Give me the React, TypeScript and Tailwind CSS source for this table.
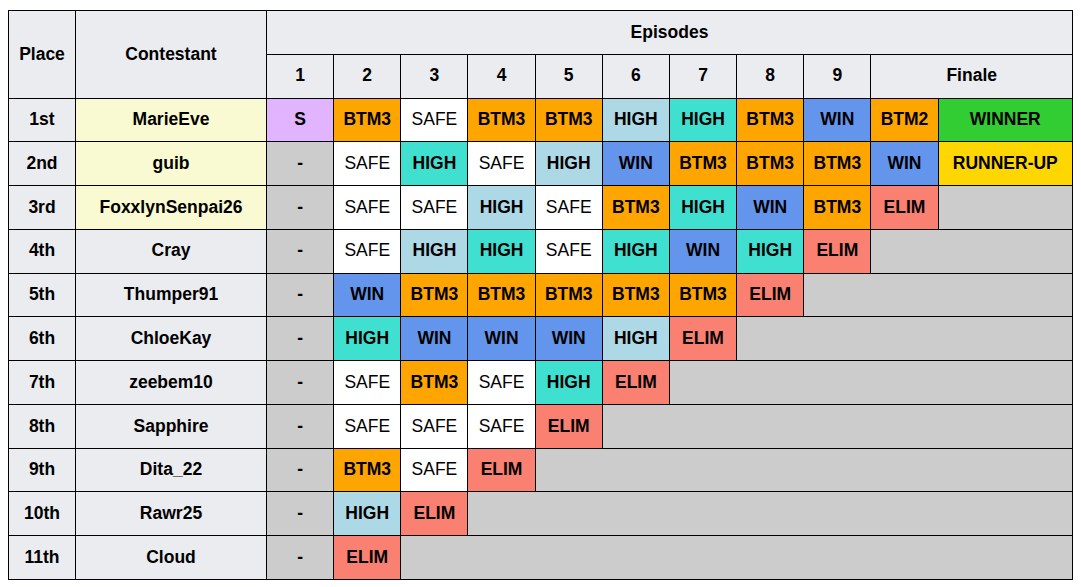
import React from "react";

type Cell = { t: string; c: string; bold?: boolean };

const S = (t: string, c: string, bold = true): Cell => ({ t, c, bold });

const LAV = "bg-[#e0b4ff]";
const GRAY = "bg-[#cccccc]";
const ORG = "bg-[#ffa500]";
const WHT = "bg-white";
const TRQ = "bg-[#40e0d0]";
const LB = "bg-[#add8e6]";
const WINC = "bg-[#6495ed]";
const ELIMC = "bg-[#fa8072]";
const GRN = "bg-[#32cd32]";
const GOLD = "bg-[#ffd700]";

const dash = S("-", GRAY);
const safe = S("SAFE", WHT, false);
const btm3 = S("BTM3", ORG);
const hiT = S("HIGH", TRQ);
const hiB = S("HIGH", LB);
const win = S("WIN", WINC);
const elim = S("ELIM", ELIMC);

const rows: { place: string; name: string; yellow: boolean; cells: Cell[] }[] = [
  { place: "1st", name: "MarieEve", yellow: true, cells: [S("S", LAV), btm3, safe, btm3, btm3, hiB, hiT, btm3, win, S("BTM2", ORG), S("WINNER", GRN)] },
  { place: "2nd", name: "guib", yellow: true, cells: [dash, safe, hiT, safe, hiB, win, btm3, btm3, btm3, win, S("RUNNER-UP", GOLD)] },
  { place: "3rd", name: "FoxxlynSenpai26", yellow: true, cells: [dash, safe, safe, hiB, safe, btm3, hiT, win, btm3, elim] },
  { place: "4th", name: "Cray", yellow: false, cells: [dash, safe, hiB, hiT, safe, hiT, win, hiT, elim] },
  { place: "5th", name: "Thumper91", yellow: false, cells: [dash, win, btm3, btm3, btm3, btm3, btm3, elim] },
  { place: "6th", name: "ChloeKay", yellow: false, cells: [dash, hiT, win, win, win, hiB, elim] },
  { place: "7th", name: "zeebem10", yellow: false, cells: [dash, safe, btm3, safe, hiT, elim] },
  { place: "8th", name: "Sapphire", yellow: false, cells: [dash, safe, safe, safe, elim] },
  { place: "9th", name: "Dita_22", yellow: false, cells: [dash, btm3, safe, elim] },
  { place: "10th", name: "Rawr25", yellow: false, cells: [dash, hiB, elim] },
  { place: "11th", name: "Cloud", yellow: false, cells: [dash, elim] },
];

const td = "border border-black h-[43.77px] p-0 text-center align-middle";

export default function App() {
  return (
    <div className="bg-white min-h-[587px] pl-[8px] pt-[10px] text-black text-[17.5px] leading-none" style={{ fontFamily: '"Liberation Sans", Arial, sans-serif' }}>
      <table className="border-collapse table-fixed w-[1064px]">
        <colgroup>
          <col className="w-[67px]" />
          <col className="w-[191px]" />
          {Array.from({ length: 10 }).map((_, i) => (
            <col key={i} className="w-[67.1667px]" />
          ))}
          <col className="w-[134.333px]" />
        </colgroup>
        <thead>
          <tr>
            <th rowSpan={2} className={`${td} bg-[#eaecf0] font-bold`}>Place</th>
            <th rowSpan={2} className={`${td} bg-[#eaecf0] font-bold`}>Contestant</th>
            <th colSpan={11} className={`${td} bg-[#eaecf0] font-bold`}>Episodes</th>
          </tr>
          <tr>
            {["1", "2", "3", "4", "5", "6", "7", "8", "9"].map((n) => (
              <th key={n} className={`${td} bg-[#eaecf0] font-bold`}>{n}</th>
            ))}
            <th colSpan={2} className={`${td} bg-[#eaecf0] font-bold`}>Finale</th>
          </tr>
        </thead>
        <tbody>
          {rows.map((r) => {
            const rem = 11 - r.cells.length;
            return (
              <tr key={r.place}>
                <td className={`${td} bg-[#eaecf0] font-bold`}>{r.place}</td>
                <td className={`${td} ${r.yellow ? "bg-[#fafad2]" : "bg-[#eaecf0]"} font-bold`}>{r.name}</td>
                {r.cells.map((c, i) => (
                  <td
                    key={i}
                    className={`${td} ${c.c} ${c.bold ? "font-bold" : "font-normal"}`}
                  >
                    {c.t}
                  </td>
                ))}
                {rem > 0 && <td colSpan={rem} className={`${td} ${GRAY}`}></td>}
              </tr>
            );
          })}
        </tbody>
      </table>
    </div>
  );
}
